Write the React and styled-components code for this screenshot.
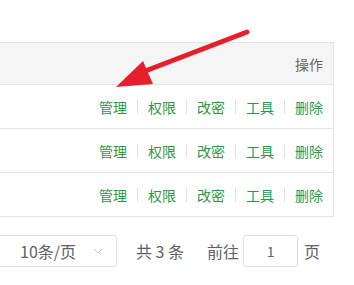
import React from 'react';
import styled, {createGlobalStyle} from 'styled-components';

const GlobalStyle = createGlobalStyle`
  html, body {
    margin: 0;
    padding: 0;
    background: #fff;
    font-family: "Noto Sans CJK SC", "Noto Sans", sans-serif;
  }
`;

const rows = [1, 2, 3];
const actions = ['管理', '权限', '改密', '工具', '删除'];

const App = () => {
    return (
        <Page>
            <GlobalStyle/>
            <Table>
                <HeaderRow>
                    <HeaderCell>操作</HeaderCell>
                </HeaderRow>
                {rows.map(row => (
                    <Row key={row}>
                        <Actions>
                            {actions.map((label, i) => (
                                <React.Fragment key={label}>
                                    {i > 0 && <Divider/>}
                                    <Link>{label}</Link>
                                </React.Fragment>
                            ))}
                        </Actions>
                    </Row>
                ))}
            </Table>
            <Pager>
                <SizeSelect>
                    <span>10条/页</span>
                    <Chevron viewBox="0 0 12 12">
                        <path d="M2 4 L6 8 L10 4" fill="none" stroke="#c0c4cc" strokeWidth="1"/>
                    </Chevron>
                </SizeSelect>
                <Total>共 3 条</Total>
                <Jumper>
                    <PagerText>前往</PagerText>
                    <PageInput>1</PageInput>
                    <PagerText>页</PagerText>
                </Jumper>
            </Pager>
            <Arrow viewBox="0 0 354 285">
                <line x1="247" y1="32" x2="140" y2="73" stroke="#e5202a" strokeWidth="5" strokeLinecap="round"/>
                <polygon points="116,87 143,61 153,84" fill="#e5202a"/>
            </Arrow>
        </Page>
    );
};

export default App;

const Page = styled.div`
  position: relative;
  width: 354px;
  height: 285px;
  overflow: hidden;
  padding-top: 42px;
  box-sizing: border-box;
`;

const Table = styled.div`
  width: 334px;
  border-top: 1px solid #e4e4e4;
  border-right: 1px solid #e4e4e4;
  box-sizing: border-box;
`;

const HeaderRow = styled.div`
  height: 42px;
  background: #f5f5f5;
  border-bottom: 1px solid #e4e4e4;
  display: flex;
  align-items: center;
  justify-content: flex-end;
  padding-right: 10px;
  box-sizing: border-box;
`;

const HeaderCell = styled.div`
  font-size: 14px;
  color: #666;
`;

const Row = styled.div`
  height: 44px;
  border-bottom: 1px solid #e4e4e4;
  display: flex;
  align-items: center;
  justify-content: flex-end;
  padding-right: 10px;
  box-sizing: border-box;
`;

const Actions = styled.div`
  display: flex;
  align-items: center;
`;

const Link = styled.span`
  font-size: 14px;
  color: #2f983f;
  line-height: 20px;
`;

const Divider = styled.span`
  width: 1px;
  height: 14px;
  background: #e0e0e0;
  margin: 0 10px;
`;

const Pager = styled.div`
  display: flex;
  align-items: center;
  margin-top: 18px;
  margin-left: -8px;
`;

const SizeSelect = styled.div`
  width: 125px;
  height: 32px;
  border: 1px solid #dcdfe6;
  border-radius: 3px;
  box-sizing: border-box;
  display: flex;
  align-items: center;
  justify-content: space-between;
  padding: 0 12px 0 27px;
  font-size: 16px;
  color: #606266;
`;

const Chevron = styled.svg`
  width: 12px;
  height: 12px;
`;

const PagerText = styled.span`
  font-size: 16px;
  color: #606266;
`;

const Total = styled(PagerText)`
  margin-left: 19px;
`;

const Jumper = styled.div`
  display: flex;
  align-items: center;
  gap: 4px;
  margin-left: 23px;
`;

const PageInput = styled.div`
  width: 55px;
  height: 32px;
  border: 1px solid #dcdfe6;
  border-radius: 3px;
  box-sizing: border-box;
  display: flex;
  align-items: center;
  justify-content: center;
  font-size: 14px;
  color: #606266;
  margin-right: 2px;
`;

const Arrow = styled.svg`
  position: absolute;
  left: 0;
  top: 0;
  width: 354px;
  height: 285px;
  pointer-events: none;
`;
